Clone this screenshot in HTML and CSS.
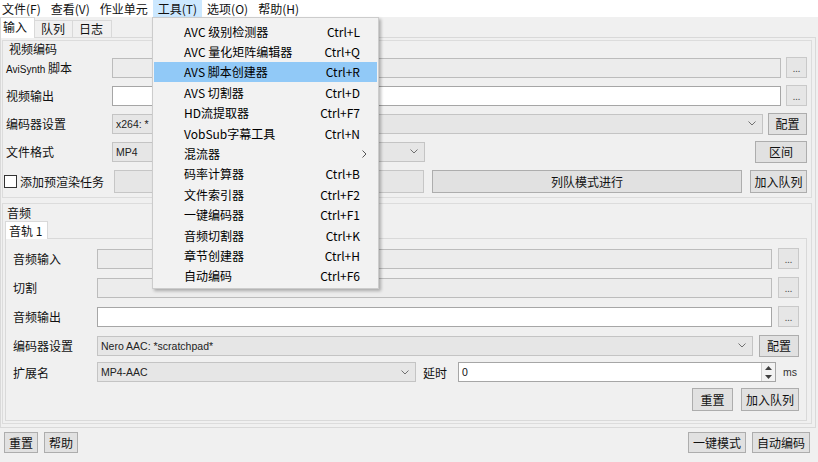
FILE: index.html
```html
<!DOCTYPE html>
<html lang="zh-CN">
<head>
<meta charset="utf-8">
<title>MeGUI</title>
<link rel="stylesheet" href="styles.css">
</head>
<body>
<div class="menubar">
  <span class="mi first">文件(F)</span>
  <span class="mi">查看(V)</span>
  <span class="mi">作业单元</span>
  <span class="mi open">工具(T)</span>
  <span class="mi">选项(O)</span>
  <span class="mi">帮助(H)</span>
</div>

<div class="tabs main-tabs">
  <span class="tab active">输入</span>
  <span class="tab">队列</span>
  <span class="tab">日志</span>
</div>

<div class="panel">
  <div class="group video">
    <div class="gtitle">视频编码</div>
    <div class="rows">
      <div class="row">
        <span class="lbl vl"><span class="lat small">AviSynth</span> 脚本</span>
        <span class="tb dis grow"></span>
        <span class="btn dots">...</span>
      </div>
      <div class="row">
        <span class="lbl vl">视频输出</span>
        <span class="tb grow"></span>
        <span class="btn dots">...</span>
      </div>
      <div class="row">
        <span class="lbl vl">编码器设置</span>
        <span class="combo grow"><span class="lat">x264: *</span><svg class="chev" width="8" height="5" viewBox="0 0 8 5"><polyline points="0.5,0.5 4,4 7.5,0.5" fill="none" stroke="#707070"/></svg></span>
        <span class="btn cfg">配置</span>
      </div>
      <div class="row">
        <span class="lbl vl">文件格式</span>
        <span class="combo fmt"><span class="lat">MP4</span><svg class="chev" width="8" height="5" viewBox="0 0 8 5"><polyline points="0.5,0.5 4,4 7.5,0.5" fill="none" stroke="#707070"/></svg></span>
        <span class="spacer"></span>
        <span class="btn range">区间</span>
      </div>
      <div class="row last">
        <label class="chk"><span class="box"></span>添加预渲染任务</label>
        <span class="btn dis wide1"></span>
        <span class="btn wide2">列队模式进行</span>
        <span class="btn queue">加入队列</span>
      </div>
    </div>
  </div>

  <div class="group audio">
    <div class="gtitle">音频</div>
    <div class="tabs sub-tabs">
      <span class="tab active">音轨 1</span>
    </div>
    <div class="subpanel">
      <div class="row">
        <span class="lbl al">音频输入</span>
        <span class="tb dis grow"></span>
        <span class="btn dots">...</span>
      </div>
      <div class="row">
        <span class="lbl al">切割</span>
        <span class="tb dis grow"></span>
        <span class="btn dots">...</span>
      </div>
      <div class="row">
        <span class="lbl al">音频输出</span>
        <span class="tb grow"></span>
        <span class="btn dots">...</span>
      </div>
      <div class="row">
        <span class="lbl al">编码器设置</span>
        <span class="combo grow"><span class="lat">Nero AAC: *scratchpad*</span><svg class="chev" width="8" height="5" viewBox="0 0 8 5"><polyline points="0.5,0.5 4,4 7.5,0.5" fill="none" stroke="#707070"/></svg></span>
        <span class="btn cfg2">配置</span>
      </div>
      <div class="row r5">
        <span class="lbl al">扩展名</span>
        <span class="combo ext"><span class="lat">MP4-AAC</span><svg class="chev" width="8" height="5" viewBox="0 0 8 5"><polyline points="0.5,0.5 4,4 7.5,0.5" fill="none" stroke="#707070"/></svg></span>
        <span class="delay">延时</span>
        <span class="num grow"><span class="lat">0</span><span class="spin"><svg width="7" height="4" viewBox="0 0 7 4"><polygon points="0,4 3.5,0 7,4" fill="#404040"/></svg><svg width="7" height="4" viewBox="0 0 7 4"><polygon points="0,0 3.5,4 7,0" fill="#404040"/></svg></span></span>
        <span class="unit lat">ms</span>
      </div>
      <div class="row r6">
        <span class="spacer"></span>
        <span class="btn reset2">重置</span>
        <span class="btn queue2">加入队列</span>
      </div>
    </div>
  </div>
</div>

<div class="bottom">
  <span class="btn bsm">重置</span>
  <span class="btn bsm">帮助</span>
  <span class="spacer"></span>
  <span class="btn bwide">一键模式</span>
  <span class="btn bwide">自动编码</span>
</div>

<div class="menu">
  <div class="item"><span>AVC 级别检测器</span><span>Ctrl+L</span></div>
  <div class="item"><span>AVC 量化矩阵编辑器</span><span>Ctrl+Q</span></div>
  <div class="item hot"><span>AVS 脚本创建器</span><span>Ctrl+R</span></div>
  <div class="item"><span>AVS 切割器</span><span>Ctrl+D</span></div>
  <div class="item"><span>HD流提取器</span><span>Ctrl+F7</span></div>
  <div class="item"><span>VobSub字幕工具</span><span>Ctrl+N</span></div>
  <div class="item"><span>混流器</span><svg class="sub" width="5" height="8" viewBox="0 0 5 8"><polyline points="0.5,0.5 4,4 0.5,7.5" fill="none" stroke="#555"/></svg></div>
  <div class="item"><span>码率计算器</span><span>Ctrl+B</span></div>
  <div class="item"><span>文件索引器</span><span>Ctrl+F2</span></div>
  <div class="item"><span>一键编码器</span><span>Ctrl+F1</span></div>
  <div class="item"><span>音频切割器</span><span>Ctrl+K</span></div>
  <div class="item"><span>章节创建器</span><span>Ctrl+H</span></div>
  <div class="item"><span>自动编码</span><span>Ctrl+F6</span></div>
</div>
</body>
</html>
```

FILE: styles.css
```css
* { box-sizing: border-box; }

body {
  margin: 0;
  width: 818px;
  height: 462px;
  overflow: hidden;
  position: relative;
  background: #f0f0f0;
  color: #111;
  font: 12px "Noto Sans CJK SC", "Noto Sans", sans-serif;
}

.lat {
  font-family: "Liberation Sans", Arial, sans-serif;
  font-size: 10.5px;
}
.lat.small { font-size: 10px; }

/* menu bar */
.menubar {
  height: 17px;
  background: #fff;
  display: flex;
  align-items: stretch;
}
.mi {
  padding: 0 5px;
  line-height: 17px;
}
.mi.first { padding-left: 2px; }
.mi.open { background: #cce8ff; }

/* tabs */
.tabs {
  display: flex;
  align-items: flex-end;
}
.main-tabs { height: 20px; }
.tab {
  height: 17px;
  line-height: 15px;
  padding: 0 6px;
  border: 1px solid #d9d9d9;
  border-bottom: none;
  background: #f0f0f0;
  margin-left: -1px;
}
.tab.active {
  height: 21px;
  line-height: 18px;
  background: #fff;
  padding: 0 7px 0 2px;
  margin-left: 0;
  margin-bottom: -1px;
  position: relative;
  z-index: 1;
}
.main-tabs .tab:nth-child(2) { padding: 0 7px 0 6px; }
.main-tabs .tab:nth-child(3) { padding: 0 8px 0 6px; }

.panel {
  border: 1px solid #d9d9d9;
  width: 816px;
  height: 391px;
  padding: 2px 3px 0 1px;
}

.group {
  border: 1px solid #dcdcdc;
}
.gtitle {
  line-height: 15px;
  padding-left: 3px;
}

.video {
  padding: 0 4px 4px 3px;
}
.video .gtitle { margin-bottom: 1px; }

.rows {
  display: flex;
  flex-direction: column;
  gap: 7px;
}
.row {
  display: flex;
  align-items: center;
  height: 21px;
}
.row.last { height: 23px; margin-top: 1px; }

.lbl { flex: none; }
.vl { width: 106px; }
.al { width: 84px; }

.grow { flex: 1; }
.spacer { flex: 1; }

.tb {
  height: 20px;
  border: 1px solid #a6a6a6;
  background: #fff;
}
.tb.dis {
  background: #ececec;
  border-color: #bcbcbc;
}

.combo {
  height: 20px;
  border: 1px solid #c4c4c4;
  background: #e6e6e6;
  display: flex;
  align-items: center;
  padding: 0 6px 0 3px;
  color: #222;
}
.combo .lat { flex: 1; }
.chev { flex: none; }
.fmt { width: 313px; }
.ext { width: 319px; }

.btn {
  display: flex;
  align-items: center;
  justify-content: center;
  height: 21px;
  background: #e1e1e1;
  border: 1px solid #adadad;
  color: #111;
}
.btn.dis {
  background: #e6e6e6;
  border-color: #c6c6c6;
}
.dots {
  width: 21px;
  margin-left: 5px;
  background: #e6e6e6;
  border-color: #c9c9c9;
  color: #555;
  font-size: 9px;
  line-height: 1;
  padding-top: 2px;
}
.cfg { width: 39px; margin-left: 5px; height: 22px; }
.range { width: 52px; height: 22px; }

.chk {
  display: flex;
  align-items: center;
  margin-left: -2px;
  width: 110px;
  flex: none;
}
.box {
  width: 13px;
  height: 13px;
  border: 1px solid #333;
  background: #fff;
  margin-right: 3px;
}
.wide1 { width: 310px; height: 23px; }
.wide2 { width: 310px; height: 23px; margin-left: 8px; }
.queue { width: 57px; height: 23px; margin-left: 8px; }

/* audio */
.audio {
  margin-top: 5px;
  height: 221px;
  padding: 1px 3px 0 1px;
}
.audio .gtitle { margin-bottom: 1px; }
.sub-tabs .tab.active {
  height: 18px;
  line-height: 17px;
  padding: 0 5px 0 3px;
  margin-left: 1px;
}
.subpanel {
  border: 1px solid #d9d9d9;
  margin-left: 1px;
  margin-right: 1px;
  height: 183px;
  padding: 9px 7px 0 7px;
  display: flex;
  flex-direction: column;
  gap: 8px;
}
.subpanel .dots { margin-left: 6px; }
.cfg2 { width: 40px; margin-left: 6px; height: 22px; }
.r5 { margin-top: -2px; height: 20px; }
.delay { margin-left: 7px; width: 35px; flex: none; }
.num {
  height: 20px;
  border: 1px solid #a6a6a6;
  background: #fff;
  display: flex;
  align-items: center;
  padding-left: 3px;
}
.num .lat { flex: 1; }
.spin {
  width: 14px;
  height: 18px;
  display: flex;
  flex-direction: column;
  align-items: center;
  justify-content: space-around;
  border-left: 1px solid #d0d0d0;
  background: #f3f3f3;
}
.unit { width: 16px; margin-left: 7px; color: #333; flex: none; }
.r6 { height: 23px; margin-top: -2px; }
.reset2 { width: 41px; height: 23px; }
.queue2 { width: 58px; height: 23px; margin-left: 8px; }

/* bottom */
.bottom {
  display: flex;
  align-items: center;
  padding: 4px 8px 0 4px;
  gap: 6px;
}
.bsm { width: 34px; height: 21px; }
.bwide { width: 58px; height: 21px; }

/* dropdown menu */
.menu {
  position: absolute;
  left: 152px;
  top: 17px;
  width: 227px;
  height: 272px;
  background: #f2f2f2;
  border: 1px solid #cccccc;
  box-shadow: 2px 2px 3px rgba(0, 0, 0, 0.28);
  padding: 3px 1px;
  z-index: 10;
}
.item {
  height: 20.4px;
  display: flex;
  align-items: center;
  justify-content: space-between;
  padding: 0 17px 0 30px;
  color: #000;
}
.item.hot { background: #91c9f7; }
.item .sub { margin-right: -7px; }
```
